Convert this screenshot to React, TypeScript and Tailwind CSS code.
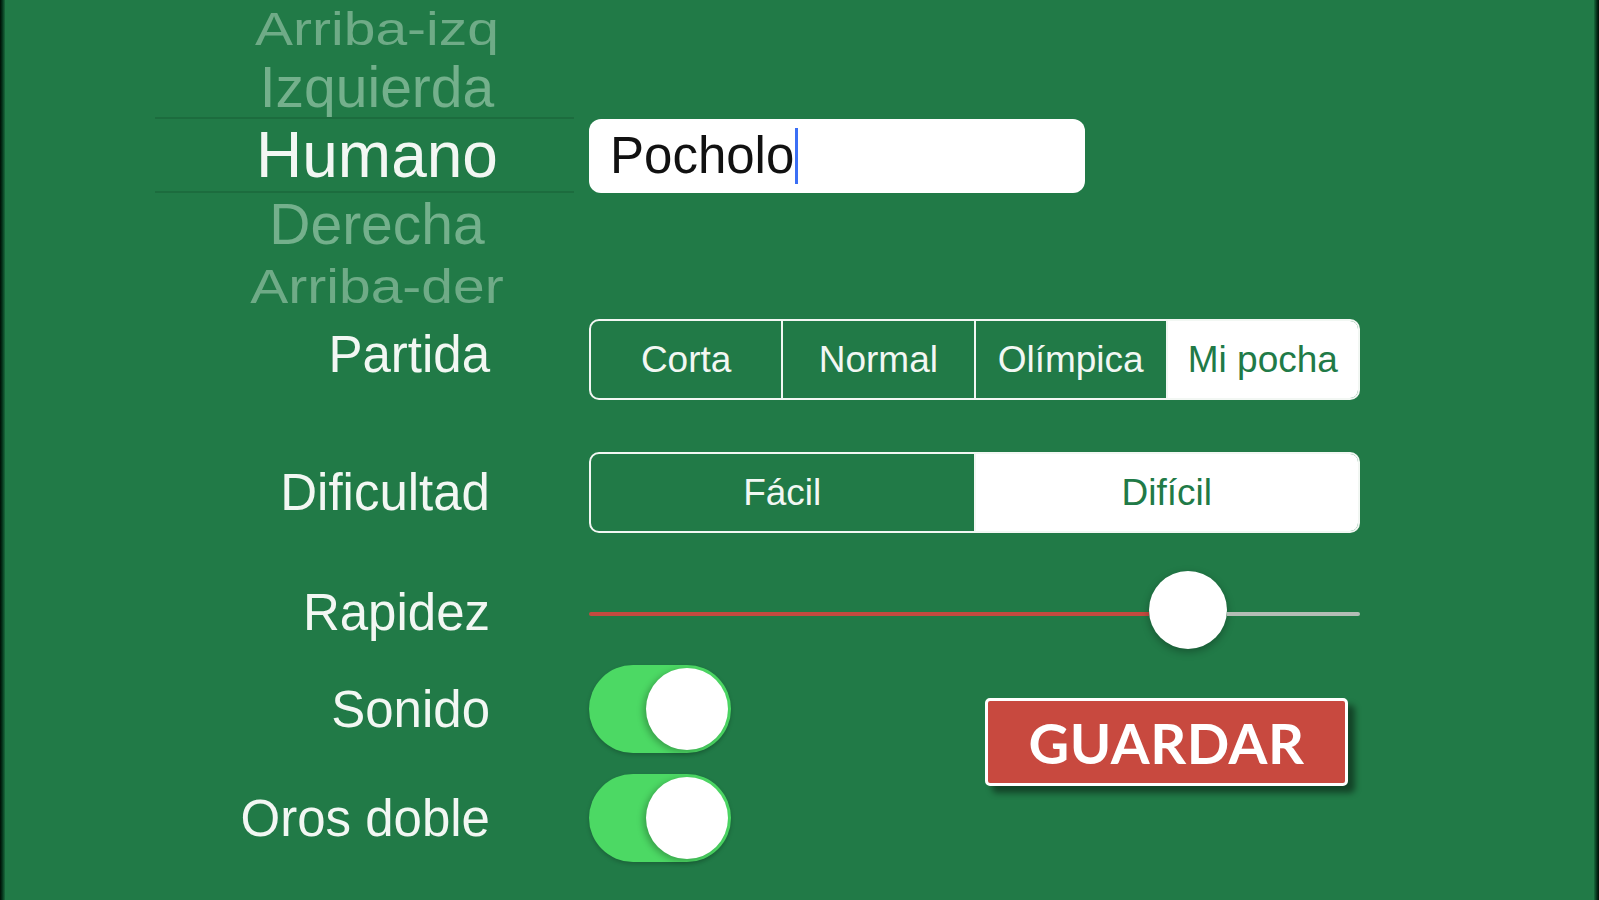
import React from 'react';

const sans = "font-['Liberation_Sans','Arial',sans-serif]";

// Segmented control like UISegmentedControl
function Segmented({ items, selected }: { items: string[]; selected: number }) {
  return (
    <div className="flex h-[81px] w-[771px] overflow-hidden rounded-[10px] border-2 border-[#f2f7f3]">
      {items.map((label, i) => (
        <div
          key={label}
          className={`flex flex-1 items-center justify-center text-[37px] ${
            i > 0 ? 'border-l-2 border-[#f2f7f3]' : ''
          } ${i === selected ? 'bg-white text-[#217a47]' : 'text-[#f2f7f3]'}`}
        >
          {label}
        </div>
      ))}
    </div>
  );
}

function Toggle() {
  return (
    <div className="flex h-[88px] w-[142px] items-center justify-end rounded-full bg-[#4cd964] p-[3px] shadow-[0_2px_4px_rgba(0,0,0,0.2)]">
      <div className="h-[82px] w-[82px] rounded-full bg-white shadow-[-3px_2px_6px_rgba(0,0,0,0.25)]" />
    </div>
  );
}

function Label({ children, className = '' }: { children: React.ReactNode; className?: string }) {
  return (
    <div className={`pr-[84px] text-right text-[51px] leading-none text-[#f2f7f3] ${className}`}>{children}</div>
  );
}

export default function App() {
  return (
    <div className={`flex h-[900px] w-[1599px] overflow-hidden bg-[#217a47] ${sans}`}>
      <div className="w-[5px] shrink-0 bg-gradient-to-r from-[#000d05] to-[#1a6a3c]" />

      <div className="flex flex-1 flex-col pl-[150px]">
        {/* Picker + name field */}
        <div className="grid grid-cols-[419px_771px] gap-x-[15px]">
          <div className="flex flex-col pl-[25px] text-center leading-none">
            <div className="flex h-[58px] items-center justify-center text-[57px] text-[#6fab87] scale-y-[0.8]">Arriba-izq</div>
            <div className="flex h-[59px] items-center justify-center text-[57px] text-[#74b08c]">Izquierda</div>
            <div className="-ml-[25px] flex h-[76px] items-center justify-center border-y-2 border-[#1c6c3e] pl-[25px] text-[64px] text-[#f2f7f3]">
              Humano
            </div>
            <div className="flex h-[63px] items-center justify-center text-[57px] text-[#74b08c]">Derecha</div>
            <div className="flex h-[60px] items-center justify-center text-[57px] text-[#6fab87] scale-y-[0.85]">Arriba-der</div>
          </div>
          <div className="pt-[119px]">
            <div className="flex h-[74px] w-[496px] items-center rounded-[12px] bg-white pl-[21px] text-[51px] text-[#111]">
              Pocholo
              <span className="ml-[1px] h-[56px] w-[3px] bg-[#3b6ff5]" />
            </div>
          </div>
        </div>

        {/* Partida */}
        <div className="mt-[3px] grid grid-cols-[419px_771px] items-center gap-x-[15px]">
          <Label className="pb-[10px]">Partida</Label>
          <Segmented items={['Corta', 'Normal', 'Olímpica', 'Mi pocha']} selected={3} />
        </div>

        {/* Dificultad */}
        <div className="mt-[52px] grid grid-cols-[419px_771px] items-center gap-x-[15px]">
          <Label>Dificultad</Label>
          <Segmented items={['Fácil', 'Difícil']} selected={1} />
        </div>

        {/* Rapidez */}
        <div className="mt-[42px] grid h-[78px] grid-cols-[419px_771px] items-center gap-x-[15px]">
          <Label className="pb-[4px]">Rapidez</Label>
          <div className="flex h-[78px] items-center">
            <div className="h-[4px] w-[560px] rounded-l-full bg-[#c44a3f]" />
            <div className="-mt-[8px] h-[78px] w-[78px] shrink-0 rounded-full bg-white shadow-[0_3px_8px_rgba(0,0,0,0.3)]" />
            <div className="h-[4px] flex-1 rounded-r-full bg-[#b4bdb6]" />
          </div>
        </div>

        {/* Toggles + save */}
        <div className="mt-[12px] grid grid-cols-[419px_771px] gap-x-[15px]">
          <div className="flex flex-col">
            <Label className="flex h-[88px] items-center justify-end">Sonido</Label>
            <Label className="mt-[21px] flex h-[88px] items-center justify-end">Oros doble</Label>
          </div>
          <div className="flex">
            <div className="flex flex-col gap-[21px]">
              <Toggle />
              <Toggle />
            </div>
            <div className="ml-[254px] pt-[33px]">
              <div className="flex h-[88px] w-[363px] items-center justify-center rounded-[5px] border-[3px] border-white bg-[#c8493f] pt-[2px] font-['Lato',sans-serif] text-[56px] font-bold tracking-[0.5px] text-white shadow-[7px_7px_6px_rgba(0,0,0,0.45)]">
                GUARDAR
              </div>
            </div>
          </div>
        </div>
      </div>

      <div className="w-[5px] shrink-0 bg-gradient-to-r from-[#1a6a3c] to-[#000d05]" />
    </div>
  );
}
